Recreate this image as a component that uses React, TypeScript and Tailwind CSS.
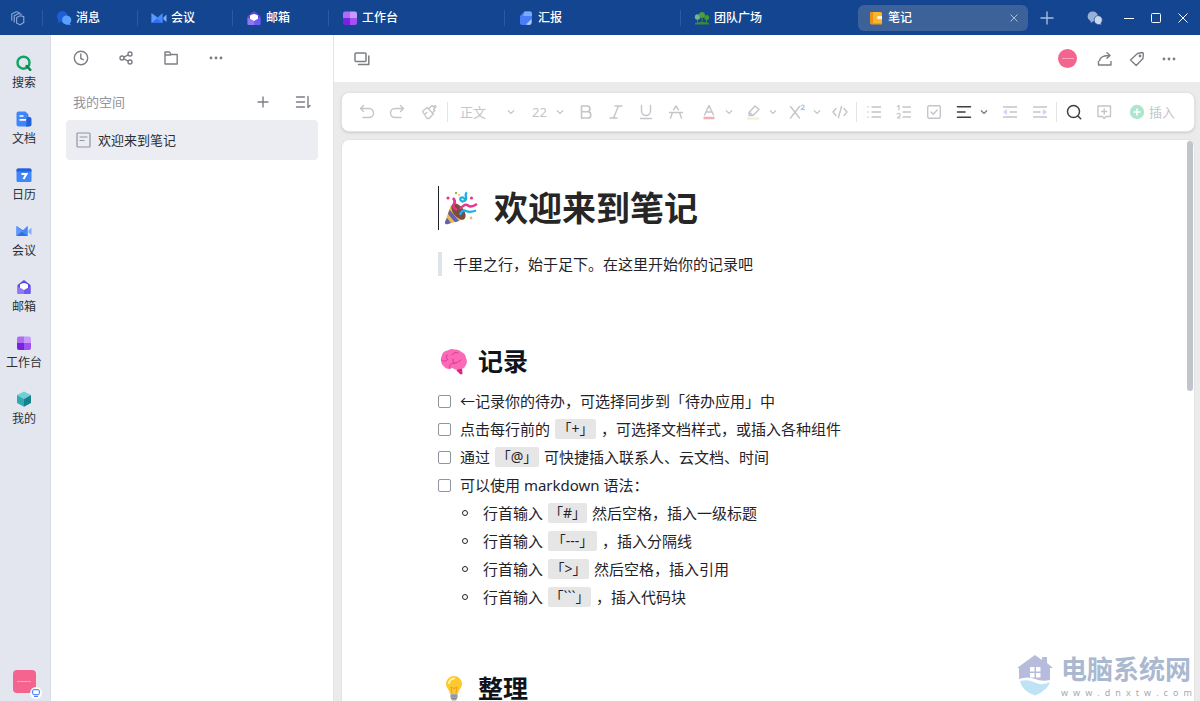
import type { ReactNode } from "react";
import clsx from "clsx";

const line = {
  width: 18,
  height: 18,
  viewBox: "0 0 18 18",
  fill: "none",
  stroke: "currentColor",
  strokeWidth: 1.4,
  strokeLinecap: "round" as const,
  strokeLinejoin: "round" as const,
};

/* App icons */
function ChatIcon() {
  return (
    <svg width="16" height="16" viewBox="0 0 16 16">
      <path d="M2.600 10 1.800 13l3-1z" fill="#1d5fd6" />
      <circle cx="6.300" cy="6.500" r="5.400" fill="#1d5fd6" />
      <path d="M10.800 5.500a4.600 4.600 0 1 1-1 9.100 4.600 4.600 0 0 1 1-9.100zm2.700 7.500 1.500 2-3.500-.4z" fill="#5aa0ff" />
    </svg>
  );
}

function MeetIcon() {
  return (
    <svg width="16" height="16" viewBox="0 0 16 16">
      <path d="M.5 3l7.500 5L11.500 3v10H.5z" fill="#2f6fea" />
      <path d="M.5 3l6 5-6 5z" fill="#5b9bff" />
      <path d="M11.500 3v10L5.500 8.500z" fill="#4a88f5" />
      <path d="M12.500 7.500 15.500 4.500v7.500l-3-2.500z" fill="#79b0ff" />
    </svg>
  );
}

function MailIcon() {
  return (
    <svg width="16" height="16" viewBox="0 0 16 16">
      <path d="M1.500 6 8 1l6.500 5v8a1 1 0 0 1-1 1h-11a1 1 0 0 1-1-1z" fill="#5a48e6" />
      <path d="M4 5.500Q8 2.500 12 5.500V9L8 11.500 4 9z" fill="#fff" />
      <path d="M1.500 7.500 8 11v4H2.500a1 1 0 0 1-1-1z" fill="#9277f5" />
      <path d="M14.500 7.500 8 11v4h5.500a1 1 0 0 0 1-1z" fill="#6d5bf0" />
    </svg>
  );
}

function WorkIcon() {
  return (
    <svg width="16" height="16" viewBox="0 0 16 16">
      <path d="M3 1.500h5V8H1V3.500a2 2 0 0 1 2-2z" fill="#b06bf5" />
      <path d="M8 1.500h5a2 2 0 0 1 2 2V8H8z" fill="#c79bfb" />
      <path d="M1 8h7v7H3a2 2 0 0 1-2-2z" fill="#7a22dd" />
      <path d="M8 8h7v5a2 2 0 0 1-2 2H8z" fill="#a252f2" />
    </svg>
  );
}

function ReportIcon() {
  return (
    <svg width="16" height="16" viewBox="0 0 16 16">
      <path d="M6.500 1.500H12a2 2 0 0 1 2 2V12a3 3 0 0 1-3 3H4a2 2 0 0 1-2-2V6z" fill="#4a7cf7" />
      <path d="M6.500 1.500H12a2 2 0 0 1 2 2V6H5z" fill="#7aa9ff" />
      <path d="M8 14.500 13.500 9v3a3 3 0 0 1-3 3z" fill="#a8ccff" />
    </svg>
  );
}

function TeamIcon() {
  return (
    <svg width="16" height="16" viewBox="0 0 16 16">
      <path d="M1 13q7-2 14 0v1.500H1zM3 8h1v5H3zM12 8h1v5h-1zM7.500 5h1v7h-1z" fill="#3c8a33" />
      <circle cx="3.500" cy="7" r="2.700" fill="#69b98b" />
      <circle cx="8" cy="5" r="3" fill="#4f9e3a" />
      <circle cx="12.700" cy="7.500" r="2.500" fill="#3f9a35" />
    </svg>
  );
}

function NoteIcon() {
  return (
    <svg width="16" height="16" viewBox="0 0 16 16">
      <rect x="2" y="2" width="12" height="12" rx="1.500" fill="#f7b42c" />
      <path d="M2 3.500A1.500 1.500 0 0 1 3.500 2H5v12H3.500A1.500 1.500 0 0 1 2 12.500z" fill="#e8901a" />
      <path d="M3 13h11v1.500H3z" fill="#ee9a1e" />
      <path d="M14 6h-3.500a1.600 1.600 0 0 0 0 3.200H14z" fill="#fff3cf" />
    </svg>
  );
}

function FindIcon() {
  return (
    <svg width="16" height="16" viewBox="0 0 16 16" fill="none" stroke="#10a566" strokeWidth="2.400" strokeLinecap="round">
      <circle cx="7.500" cy="7.700" r="6" />
      <path d="M10.500 11 14.300 14.800" stroke="#0b8350" />
    </svg>
  );
}

function DocsIcon() {
  return (
    <svg width="16" height="16" viewBox="0 0 16 16">
      <path d="M2.500.500h7l3 3v12h-10a2 2 0 0 1-2-2v-11a2 2 0 0 1 2-2z" fill="#4086fb" />
      <path d="M11 6h2.500a2 2 0 0 1 2 2v5.500a2 2 0 0 1-2 2H10z" fill="#2560d8" />
      <path d="M3.500 5h4M3.500 8.800h6.500" stroke="#fff" strokeWidth="1.700" />
    </svg>
  );
}

function CalendarIcon() {
  return (
    <svg width="16" height="16" viewBox="0 0 16 16">
      <rect x="0.500" y="1.500" width="15" height="13.500" rx="1.500" fill="#4086fb" />
      <path d="M.5 3A1.500 1.500 0 0 1 2 1.500h12A1.500 1.500 0 0 1 15.500 3v1.500H.5z" fill="#2560d8" />
      <path d="M5.500 7h5L7.500 12" fill="none" stroke="#fff" strokeWidth="2" />
    </svg>
  );
}

function CubeIcon() {
  return (
    <svg width="16" height="16" viewBox="0 0 16 16">
      <path d="M8 .5 15 4 8 8 1 4z" fill="#6fd0d4" />
      <path d="M1 4l7 4v7.800L1 12z" fill="#2fa9b2" />
      <path d="M15 4 8 8v7.800L15 12z" fill="#16808c" />
    </svg>
  );
}

/* Emoji drawings in the note */
function PartyEmoji() {
  return (
    <svg width="34" height="34" viewBox="0 0 34 34" aria-hidden="true">
      <path d="M7 14 1 31q-.5 2.500 2 2.200L21 28z" fill="#f0b73d" />
      <path d="M5.500 18.500 15 30l-4 1.200L4 23zM3 27l4 5-4 1.200Q.5 33.500 1 31z" fill="#5d62b8" />
      <ellipse cx="14.500" cy="20.500" rx="5.300" ry="9.500" transform="rotate(-38 14.500 20.500)" fill="#7a4d3c" />
      <path d="M9 7q3 3 1 6t3 6" fill="none" stroke="#e8348c" strokeWidth="2.600" />
      <path d="M23 1.500q-2 1-1 4.500t-3 4.500q-3.500-.5-2.500-3.500 3-2 4.500 2" fill="none" stroke="#20aee8" strokeWidth="2.300" />
      <path d="M16 24q2-6 6-4t10-.5" fill="none" stroke="#20aee8" strokeWidth="2.300" />
      <path d="M16 18q5-6 8-3.500T33 13" fill="none" stroke="#e8348c" strokeWidth="2.500" />
      <circle cx="4" cy="7" r="1.600" fill="#e8348c" />
      <circle cx="27.500" cy="7" r="1.600" fill="#e8348c" />
      <circle cx="12" cy="2" r="1.200" fill="#8bc34a" />
      <circle cx="27" cy="27" r="1.400" fill="#f4b183" />
      <circle cx="15" cy="4" r="1.100" fill="#f6c344" />
    </svg>
  );
}

function BrainEmoji() {
  return (
    <svg width="28" height="28" viewBox="0 0 28 28" aria-hidden="true">
      <path d="M18 19l4 2 .5 6-2 .500-4-4z" fill="#d92683" />
      <path d="M2 8Q3 4 7.500 3.500 11 1 15 2.500q4-.5 6.500 2.500 4 1.500 4.500 6 2 4-.5 7.500-1.500 4-6 3.500-4 2-7-1-6 2.500-8.500-1.500Q-1 15 2 8z" fill="#fb69b7" />
      <g fill="none" stroke="#d63b8f" strokeWidth="1" strokeLinecap="round">
        <path d="M1.500 13q3 3 6-.5M7 8q-2 3 .5 4.500M12 8q2-3.500 6-2M21 13q-3 3.500-8 3.500M13 12q-1 3 1.500 4.500M10 21q-2-3 2-4.500" />
      </g>
    </svg>
  );
}

function BulbEmoji() {
  return (
    <svg width="28" height="28" viewBox="0 0 28 28" aria-hidden="true">
      <path d="M14 2a8 8 0 0 1 8 8c0 4-3.500 5.500-4 10h-8C9.500 15.500 6 14 6 10a8 8 0 0 1 8-8z" fill="#fdc92f" />
      <path d="M9 9q1-4 5-4.500" fill="none" stroke="#fff2a8" strokeWidth="2.200" strokeLinecap="round" />
      <path d="M12 19.500 11 13l3 1.500 3-1.500-1 6.500" fill="none" stroke="#ee9d22" />
      <path d="M10.500 20h7v3.500L16 26.500h-4l-1.500-3z" fill="#a5a9ad" />
      <path d="M10.500 22h7M11 24.500h6" stroke="#80858a" />
    </svg>
  );
}

const tabs = [
  { name: "消息", icon: <ChatIcon />, width: "w-[95px]" },
  { name: "会议", icon: <MeetIcon />, width: "w-[95px]" },
  { name: "邮箱", icon: <MailIcon />, width: "w-24" },
  { name: "工作台", icon: <WorkIcon />, width: "w-44" },
  { name: "汇报", icon: <ReportIcon />, width: "w-44" },
  { name: "团队广场", icon: <TeamIcon />, width: "w-44" },
];

const nav = [
  { name: "搜索", icon: <FindIcon /> },
  { name: "文档", icon: <DocsIcon /> },
  { name: "日历", icon: <CalendarIcon /> },
  { name: "会议", icon: <MeetIcon /> },
  { name: "邮箱", icon: <MailIcon /> },
  { name: "工作台", icon: <WorkIcon /> },
  { name: "我的", icon: <CubeIcon /> },
];

function IconButton({ label, className, children }: { label: string; className?: string; children: ReactNode }) {
  return (
    <button aria-label={label} className={clsx("flex h-7 shrink-0 items-center justify-center", className)}>
      {children}
    </button>
  );
}

function Dots() {
  return (
    <svg width="18" height="18" viewBox="0 0 18 18" fill="currentColor">
      <circle cx="4" cy="9" r="1.400" />
      <circle cx="9" cy="9" r="1.400" />
      <circle cx="14" cy="9" r="1.400" />
    </svg>
  );
}

function Chevron() {
  return (
    <svg width="8" height="8" viewBox="0 0 8 8" fill="none" stroke="currentColor" strokeWidth="1.200">
      <path d="M1 2.500l3 3 3-3" />
    </svg>
  );
}

function TitleBar() {
  return (
    <header className="flex h-[35px] shrink-0 items-center bg-[#134590] text-xs text-white">
      <IconButton label="窗口" className="w-[42px] pr-1.5 text-[#8aa6d4]">
        <svg {...line} width="16" height="16" strokeWidth={1.300}>
          <path d="M7.500 8.500 11.500 6.500l4 1v6.500l-4 2.500-4-1.500zM4.800 13.500V6.500l5-2.500 3.200.8M2 11.500V4.500L7 2l3.500.8" />
        </svg>
      </IconButton>
      <nav className="flex items-center">
        {tabs.map((tab) => (
          <button
            key={tab.name}
            className={clsx("flex h-4 items-center gap-1 border-l border-[#2f599d] pl-[13px] font-medium", tab.width)}
          >
            {tab.icon}
            {tab.name}
          </button>
        ))}
        <div className="ml-0.5 flex h-[26px] w-[170px] items-center rounded-md bg-[#3d6199] pl-2.5 pr-1.5">
          <button className="flex flex-1 items-center gap-1 font-medium">
            <NoteIcon />
            笔记
          </button>
          <IconButton label="关闭标签" className="w-4 text-[#a9bddc]">
            <svg width="8" height="8" viewBox="0 0 8 8" stroke="currentColor">
              <path d="M.5.5l7 7M7.500.5l-7 7" />
            </svg>
          </IconButton>
        </div>
      </nav>
      <IconButton label="新建标签" className="ml-3 w-3.5 text-[#a9bddc]">
        <svg width="14" height="14" viewBox="0 0 14 14" stroke="currentColor" strokeWidth="1.400">
          <path d="M7 .5v13M.5 7h13" />
        </svg>
      </IconButton>
      <div className="ml-auto flex items-center pr-px">
        <IconButton label="客服" className="w-9">
          <svg width="16" height="16" viewBox="0 0 16 16">
            <path d="M6 1.500a5 5 0 1 1 0 10q-1 0-2 1.500l-.5-2A5 5 0 0 1 6 1.500z" fill="#98b0d6" />
            <path d="M11 5.500a4.500 4.500 0 0 1 3 7.700l.8 2-2.300-.6A4.500 4.500 0 1 1 11 5.500z" fill="#c8d6ee" stroke="#134590" strokeWidth=".7" />
          </svg>
        </IconButton>
        <IconButton label="最小化" className="w-8">
          <svg width="10" height="10" viewBox="0 0 10 10" stroke="#fff">
            <path d="M0 5.500h10" />
          </svg>
        </IconButton>
        <IconButton label="最大化" className="w-[22px]">
          <svg width="10" height="10" viewBox="0 0 10 10" fill="none" stroke="#fff">
            <rect x=".5" y=".5" width="9" height="9" rx="1" />
          </svg>
        </IconButton>
        <IconButton label="关闭" className="w-8">
          <svg width="10" height="10" viewBox="0 0 10 10" stroke="#fff">
            <path d="M.5.5l9 9M9.500.5l-9 9" />
          </svg>
        </IconButton>
      </div>
    </header>
  );
}

function Rail() {
  return (
    <aside className="flex w-[51px] shrink-0 flex-col items-center justify-between border-r border-[#d9dce4] bg-[#e3e6ee] pb-2 pr-0.5 pt-5 text-xs leading-4 text-[#2b2f36]">
      <nav className="flex flex-col gap-5">
        {nav.map((item) => (
          <button key={item.name} className="flex flex-col items-center gap-1">
            {item.icon}
            {item.name}
          </button>
        ))}
      </nav>
      <button aria-label="我" className="relative flex size-[23px] items-center justify-center rounded bg-[#f4648f]">
        <span className="h-px w-3.5 bg-[#f9a5be]" />
        <span className="absolute -bottom-1.5 -right-1.5 flex size-3 items-center justify-center rounded-full bg-white">
          <svg width="8" height="8" viewBox="0 0 8 8" fill="none" stroke="#3370ff">
            <rect x=".7" y=".7" width="6.600" height="5" rx="1" />
            <path d="M2 7.400h4" />
          </svg>
        </span>
      </button>
    </aside>
  );
}

function NoteList() {
  return (
    <aside className="w-[283px] shrink-0 border-r border-[#e3e4e6] bg-white text-[#7b7f85]">
      <div className="flex items-center pl-[15px] pt-[9px]">
        <IconButton label="最近" className="mr-[15px] w-[30px]">
          <svg {...line}>
            <circle cx="9" cy="9" r="6.700" />
            <path d="M8.800 5v4.500l2.500 1.200" />
          </svg>
        </IconButton>
        <IconButton label="共享" className="mr-[15px] w-[30px]">
          <svg {...line}>
            <circle cx="5" cy="9" r="2" />
            <circle cx="13" cy="5" r="2" />
            <circle cx="13" cy="13" r="2" />
            <path d="M6.900 8.100 11.200 5.900M6.900 9.900l4.300 2.200" />
          </svg>
        </IconButton>
        <IconButton label="文件夹" className="mr-[15px] w-[30px]">
          <svg {...line}>
            <path d="M3 3h4.500L9 5.500h6.200V15H3zM3 6h5.500" />
          </svg>
        </IconButton>
        <IconButton label="更多" className="w-[30px]">
          <Dots />
        </IconButton>
      </div>
      <div className="mt-4 flex h-7 items-center pl-[22px] pr-4">
        <h2 className="flex-1 text-[13px] leading-5 text-[#8f959e]">我的空间</h2>
        <IconButton label="新建笔记" className="mr-3 w-7">
          <svg {...line}>
            <path d="M9 4v10M4 9h10" />
          </svg>
        </IconButton>
        <IconButton label="排序" className="w-7">
          <svg {...line}>
            <path d="M2.500 4h8M2.500 9h8M2.500 14h8M14 3.500v11l2-2" />
          </svg>
        </IconButton>
      </div>
      <a
        href="#welcome"
        className="mx-[15px] mt-1 flex h-10 items-center gap-1.5 rounded bg-[#ebedf2] pl-2 text-[13px] leading-5 text-[#2b2f36]"
      >
        <svg {...line} stroke="#8f959e" strokeWidth={1.200}>
          <rect x="3" y="2" width="13" height="14" rx="1" />
          <path d="M6 6h7M6 9.500h4" />
        </svg>
        欢迎来到笔记
      </a>
    </aside>
  );
}

function PageHeader() {
  return (
    <div className="flex h-12 items-center border-b border-[#ededed] bg-white pl-[13px] pr-[15px] text-[#7b7f85]">
      <IconButton label="新窗口打开" className="mr-auto w-[30px]">
        <svg {...line} strokeWidth={1.500}>
          <rect x="2" y="3" width="11" height="8.500" rx="1" />
          <path d="M15.800 6v8.500H5.500" />
        </svg>
      </IconButton>
      <button aria-label="头像" className="mr-3 flex size-[19px] items-center justify-center rounded-full bg-[#f4648f]">
        <span className="h-px w-3 bg-[#f9a5be]" />
      </button>
      <IconButton label="分享" className="w-8">
        <svg {...line}>
          <path d="M2.500 11.500V15h12.500v-3.500M3.500 10.500Q4.500 5.500 13.500 5.500M11 2.800 14 5.500l-3 2.700" />
        </svg>
      </IconButton>
      <IconButton label="标签" className="w-8">
        <svg {...line}>
          <path d="M9.500 3.500 14 2.500q1.300 0 1.300 1.300L15 8.500l-6.800 7L2.500 10z" />
          <circle cx="12" cy="6" r=".7" />
        </svg>
      </IconButton>
      <IconButton label="更多" className="w-8">
        <Dots />
      </IconButton>
    </div>
  );
}

function Divider() {
  return <span className="mx-px h-5 w-0.5 shrink-0 border-l border-[#e4e5e7]" />;
}

function Picker({ label, value, className }: { label: string; value: string; className: string }) {
  return (
    <label className={clsx("relative flex shrink-0 items-center", className)}>
      <span className="sr-only">{label}</span>
      <select className="h-7 w-full appearance-none bg-transparent pl-2.5 text-[13px] leading-7 outline-none">
        <option>{value}</option>
      </select>
      <span className="pointer-events-none absolute right-[7px]">
        <Chevron />
      </span>
    </label>
  );
}

function Toolbar() {
  return (
    <div
      role="toolbar"
      className="flex h-10 shrink-0 items-center overflow-hidden rounded-lg border border-[#e2e3e5] bg-white pl-2.5 text-[#c2c5c9] shadow-sm"
    >
      <IconButton label="撤销" className="w-[30px]">
        <svg {...line}>
          <path d="M5.500 2.500 2.500 5.500l3 3M2.800 5.500H11a4.500 4.500 0 0 1 0 9H5" />
        </svg>
      </IconButton>
      <IconButton label="重做" className="w-[30px]">
        <svg {...line}>
          <path d="M12.500 2.500l3 3-3 3M15.200 5.500H7a4.500 4.500 0 0 0 0 9h6" />
        </svg>
      </IconButton>
      <IconButton label="格式刷" className="w-[34px]">
        <svg {...line} strokeWidth={1.300}>
          <path d="M2.500 8.500 7 4.500l6.500 6.500L9 15.500H7zM5 11l2-1.500M8.500 6l3.500-3.500 1.500 1.500L15 2.500l1 1-2.500 3 1.500 1L12 10" />
        </svg>
      </IconButton>
      <Divider />
      <Picker label="段落样式" value="正文" className="w-[72px]" />
      <Picker label="字号" value="22" className="w-[49px]" />
      <IconButton label="粗体" className="w-[30px]">
        <svg {...line} strokeWidth={1.600}>
          <path d="M4.500 3h5.500a2.900 2.900 0 0 1 0 5.800H4.500zM4.500 8.800h6.200a3 3 0 0 1 0 6.200H4.500z" />
        </svg>
      </IconButton>
      <IconButton label="斜体" className="w-[30px]">
        <svg {...line}>
          <path d="M8 3h7M3 15h7M11.500 3l-5 12" />
        </svg>
      </IconButton>
      <IconButton label="下划线" className="w-[30px]">
        <svg {...line}>
          <path d="M4.500 2.500V8a4.500 4.500 0 0 0 9 0V2.500M3.500 15.500h11" />
        </svg>
      </IconButton>
      <IconButton label="删除线" className="w-[30px]">
        <svg {...line}>
          <path d="M2.500 9.500h13M6.500 6.800 9 3l2.500 3.800M5.500 9.500 3.500 15M12.500 9.500l2 5.500" />
        </svg>
      </IconButton>
      <IconButton label="文字颜色" className="ml-1 w-7">
        <svg {...line}>
          <path d="M4.500 12 9 2.500l4.500 9.500M6 9h6" />
          <path d="M3.500 15h11" stroke="#f2b0b3" strokeWidth="2.600" strokeLinecap="butt" />
        </svg>
      </IconButton>
      <IconButton label="选择文字颜色" className="w-3">
        <Chevron />
      </IconButton>
      <IconButton label="高亮" className="ml-1 w-7">
        <svg {...line}>
          <path d="M5 12.500V9.500L11 3l4 3.500-6 6zM5.500 9.500l3.500 3" />
          <path d="M3 15.500h12" stroke="#f3edd2" strokeWidth="2.200" strokeLinecap="butt" />
        </svg>
      </IconButton>
      <IconButton label="选择高亮颜色" className="w-3">
        <Chevron />
      </IconButton>
      <IconButton label="上标" className="ml-1 w-7">
        <svg {...line}>
          <path d="M2.500 3.500l9 11.500M11.500 3.500l-9 11.500" />
          <path d="M13 3q1.500-1.800 2.800-.5T13 6.500h3.500" stroke="#a9c1f5" strokeWidth="1.100" />
        </svg>
      </IconButton>
      <IconButton label="上标选项" className="w-3">
        <Chevron />
      </IconButton>
      <IconButton label="代码" className="ml-0.5 w-[30px]">
        <svg {...line}>
          <path d="M5 5.500 2 9l3 3.500M13 5.500 16 9l-3 3.500M10.500 3.500l-3 11" />
        </svg>
      </IconButton>
      <Divider />
      <IconButton label="无序列表" className="w-[30px]">
        <svg {...line}>
          <path d="M7 4h8.500M7 9h8.500M7 14h8.500M3 4h.1M3 9h.1M3 14h.1" />
        </svg>
      </IconButton>
      <IconButton label="有序列表" className="w-[30px]">
        <svg {...line}>
          <path d="M8 4h7.500M8 9h7.500M8 14h7.500" />
          <path d="M2.500 3.500l1.500-1V7M2.200 11q1.800-1.500 2.800 0T2.300 15H5.300" strokeWidth="1.200" />
        </svg>
      </IconButton>
      <IconButton label="任务列表" className="w-[30px]">
        <svg {...line}>
          <rect x="2.700" y="2.700" width="12.600" height="12.600" rx="1.500" />
          <path d="M6 9l2.200 2.200L12.200 7" />
        </svg>
      </IconButton>
      <IconButton label="对齐" className="w-[30px] text-[#3b3e44]">
        <svg {...line} strokeWidth={1.600}>
          <path d="M2.500 3.800h13M2.500 9h7.500M2.500 14.200h13" />
        </svg>
      </IconButton>
      <IconButton label="对齐方式" className="mr-1.5 w-2.5 text-[#6f7379]">
        <Chevron />
      </IconButton>
      <IconButton label="减少缩进" className="w-[30px]">
        <svg {...line}>
          <path d="M2.500 4h13M9 9h6.500M2.500 14h13" />
          <path d="M5.500 7 3 9l2.500 2M3.500 9H6" stroke="#cfd4f6" />
        </svg>
      </IconButton>
      <IconButton label="增加缩进" className="w-[30px]">
        <svg {...line}>
          <path d="M2.500 4h13M2.500 9H9M2.500 14h13" />
          <path d="M12.500 7 15 9l-2.500 2M12 9h2.500" stroke="#cfd4f6" />
        </svg>
      </IconButton>
      <Divider />
      <IconButton label="查找" className="w-[30px] text-[#3b3e44]">
        <svg {...line} strokeWidth={1.500}>
          <circle cx="8.500" cy="8.500" r="6" />
          <path d="M13 13 15.700 15.700" />
        </svg>
      </IconButton>
      <IconButton label="评论" className="w-[30px]">
        <svg {...line}>
          <path d="M3 3h12.500v10.500H11L9.200 15.500 7.500 13.500H3zM9.200 6v5M6.700 8.500h5" />
        </svg>
      </IconButton>
      <button className="ml-2.5 flex shrink-0 items-center gap-1 text-[13px] leading-5">
        <svg width="16" height="16" viewBox="0 0 16 16">
          <circle cx="8" cy="8" r="7.200" fill="#aee5d0" />
          <path d="M8 4.500v7M4.500 8h7" stroke="#fff" strokeWidth="1.600" />
        </svg>
        插入
      </button>
    </div>
  );
}

function Code({ children, className }: { children: ReactNode; className: string }) {
  return (
    <code
      className={clsx(
        "mx-[5px] flex h-5 shrink-0 items-center justify-center whitespace-nowrap rounded-xs bg-[#e6e6e6] font-[inherit] text-sm leading-5",
        className
      )}
    >
      {children}
    </code>
  );
}

const todos: ReactNode[] = [
  "←记录你的待办，可选择同步到「待办应用」中",
  <>
    点击每行前的<Code className="w-[41px]">「+」</Code>，可选择文档样式，或插入各种组件
  </>,
  <>
    通过<Code className="w-11">「@」</Code>可快捷插入联系人、云文档、时间
  </>,
  "可以使用 markdown 语法：",
];

const syntax = [
  { mark: "「#」", width: "w-[39px]", after: "然后空格，插入一级标题" },
  { mark: "「---」", width: "w-[49px]", after: "，插入分隔线" },
  { mark: "「>」", width: "w-[41px]", after: "然后空格，插入引用" },
  { mark: "「```」", width: "w-[43px]", after: "，插入代码块" },
];

function Note() {
  return (
    <article
      id="welcome"
      className="relative min-h-0 flex-1 overflow-hidden rounded-t-lg border border-b-0 border-[#e2e3e5] bg-white pl-24 pr-4 pt-[46px] text-[15px] leading-7 text-[#1f2329]"
    >
      <h1 className="flex h-11 items-center text-[34px] font-bold leading-[44px] text-[#262626]">
        <span className="mr-[5px] h-11 w-px bg-[#1f2329]" />
        <PartyEmoji />
        <span className="ml-4">欢迎来到笔记</span>
      </h1>
      <blockquote className="mt-[22px] border-l-4 border-[#dfe4ec] pl-[11px] leading-6">
        千里之行，始于足下。在这里开始你的记录吧
      </blockquote>

      <h2 className="mt-[67px] flex h-9 items-center gap-2.5 pl-0.5 text-[25px] font-bold leading-9 text-[#10141a]">
        <BrainEmoji />
        记录
      </h2>
      <ul className="mt-2">
        {todos.map((todo, i) => (
          <li key={i}>
            <label className="flex h-7 items-center whitespace-nowrap">
              <input
                type="checkbox"
                className="mr-[9px] size-[13px] shrink-0 appearance-none rounded-xs border border-[#8f959e] bg-white"
              />
              {typeof todo === "string" ? <span>{todo}</span> : todo}
            </label>
          </li>
        ))}
      </ul>
      <ul>
        {syntax.map((item) => (
          <li key={item.mark} className="flex h-7 items-center whitespace-nowrap pl-6">
            <span className="mr-[15px] size-1.5 rounded-full border border-[#1f2329]" />
            行首输入
            <Code className={item.width}>{item.mark}</Code>
            {item.after}
          </li>
        ))}
      </ul>

      <h2 className="mt-[59px] flex h-9 items-center gap-2.5 pl-0.5 text-[25px] font-bold leading-9 text-[#10141a]">
        <BulbEmoji />
        整理
      </h2>

      {/* Scroll thumb */}
      <div className="absolute right-px top-px h-[250px] w-1.5 rounded-full bg-[#c1c4cb]" />
    </article>
  );
}

function Watermark() {
  return (
    <div className="pointer-events-none absolute bottom-0.5 right-2 flex items-center gap-2 text-[#aab8d0]">
      <svg width="36" height="42" viewBox="0 0 36 42">
        <path d="M0 14 18 1l7 5V3h5v6l6 5h-3v12q-8 2-15-1T2 25V14z" fill="#b7bbdc" />
        <path d="M3 27q8-2 15 1.500T33 28q-2 8-15 13.500Q5 37 3 27z" fill="#bfe3f4" />
        <path d="M13 13h4.500v4.500H13zM19 13h4.500v4.500H19zM13 19h4.500v4.500H13zM19 19h4.500v4.500H19z" fill="#fff" />
      </svg>
      <div className="w-[131px]">
        <p className="whitespace-nowrap text-[26px] font-bold leading-9">电脑系统网</p>
        <p className="flex justify-between text-[9px] leading-3 text-[#a9a9ae]">
          {"www.dnxtw.com".split("").map((c, i) => (
            <span key={i}>{c}</span>
          ))}
        </p>
      </div>
    </div>
  );
}

export default function App() {
  return (
    <div className="relative flex h-screen flex-col overflow-hidden font-['Noto_Sans','Noto_Sans_CJK_SC',sans-serif]">
      <TitleBar />
      <div className="flex min-h-0 flex-1">
        <Rail />
        <NoteList />
        <main className="flex min-w-0 flex-1 flex-col bg-[#ebebeb]">
          <PageHeader />
          <div className="flex min-h-0 flex-1 flex-col gap-[7px] pl-[7px] pr-[5px] pt-[9px]">
            <Toolbar />
            <Note />
          </div>
        </main>
      </div>
      <Watermark />
    </div>
  );
}
